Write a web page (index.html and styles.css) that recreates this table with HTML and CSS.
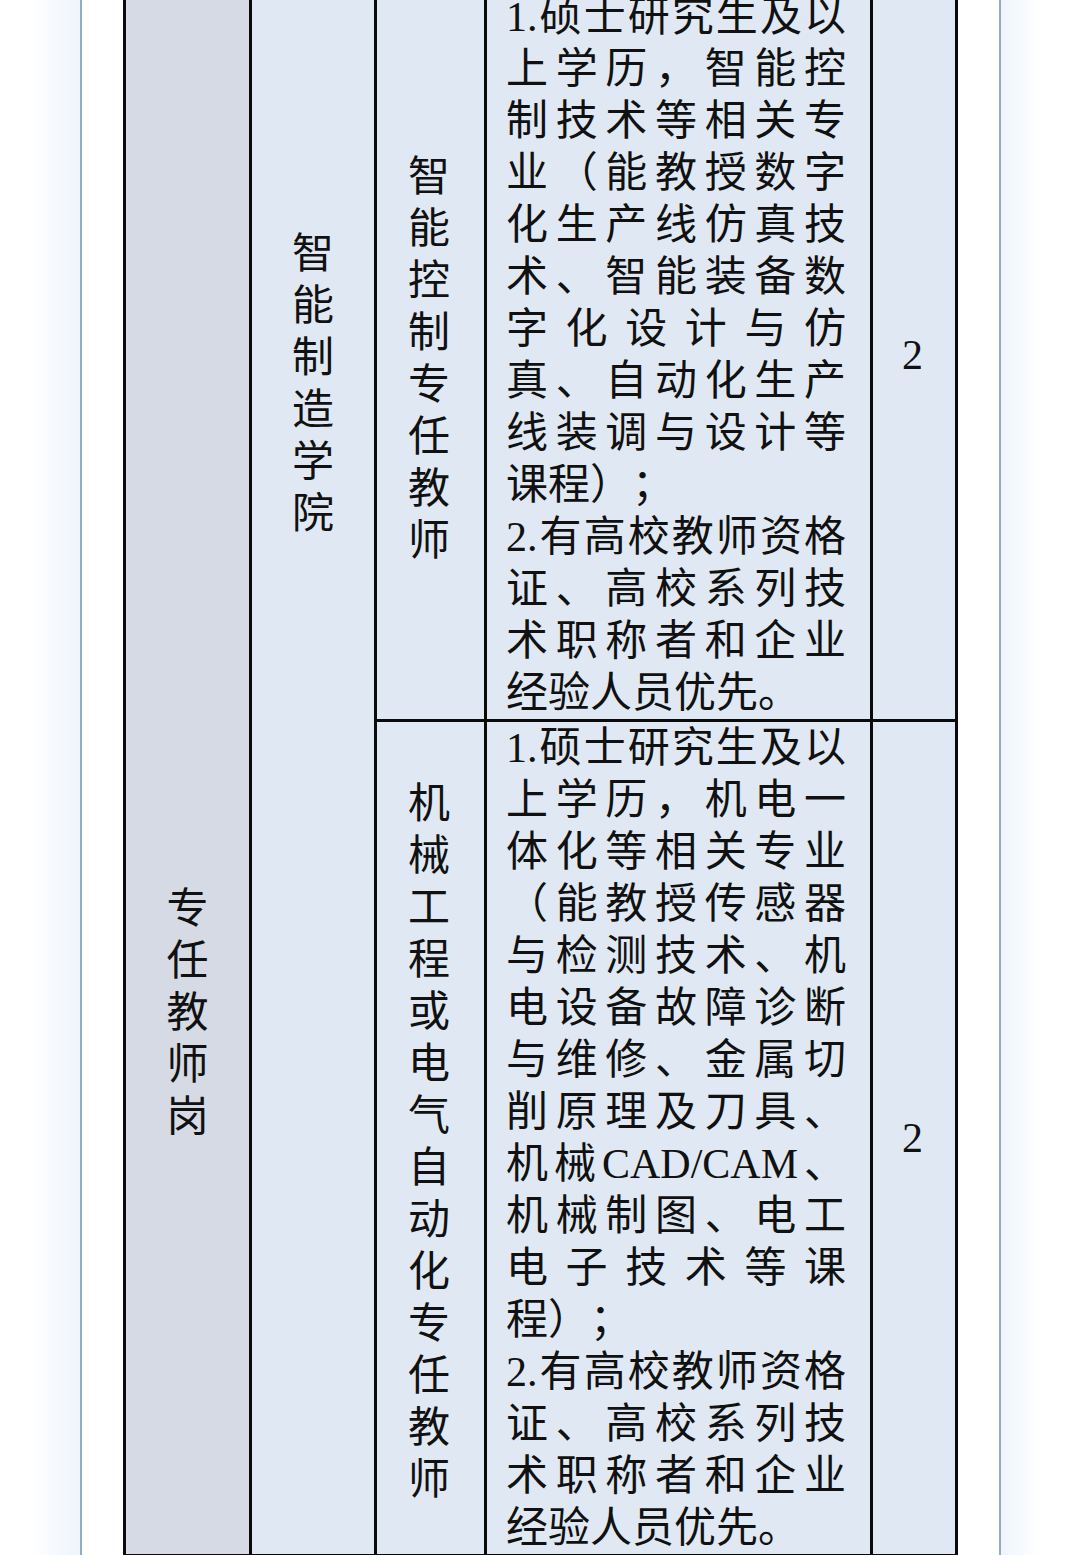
FILE: index.html
```html
<!DOCTYPE html>
<html lang="zh-CN">
<head>
<meta charset="utf-8">
<title>专任教师岗</title>
<link rel="stylesheet" href="styles.css">
</head>
<body>
<div class="frame">
  <div class="table">
    <div class="cell post"><div class="vt">专任教师岗</div></div>
    <div class="cell dept"><div class="vt">智能制造学院</div></div>

    <div class="cell name r1"><div class="vt">智能控制专任教师</div></div>
    <div class="cell req r1">
      <span class="ln">1.硕士研究生及以</span>
      <span class="ln">上学历，智能控</span>
      <span class="ln">制技术等相关专</span>
      <span class="ln">业（能教授数字</span>
      <span class="ln">化生产线仿真技</span>
      <span class="ln">术、智能装备数</span>
      <span class="ln">字化设计与仿</span>
      <span class="ln">真、自动化生产</span>
      <span class="ln">线装调与设计等</span>
      <span class="ln end">课程）；</span>
      <span class="ln">2.有高校教师资格</span>
      <span class="ln">证、高校系列技</span>
      <span class="ln">术职称者和企业</span>
      <span class="ln end">经验人员优先。</span>
    </div>
    <div class="cell num r1">2</div>

    <div class="cell name r2"><div class="vt">机械工程或电气自动化专任教师</div></div>
    <div class="cell req r2">
      <span class="ln">1.硕士研究生及以</span>
      <span class="ln">上学历，机电一</span>
      <span class="ln">体化等相关专业</span>
      <span class="ln">（能教授传感器</span>
      <span class="ln">与检测技术、机</span>
      <span class="ln">电设备故障诊断</span>
      <span class="ln">与维修、金属切</span>
      <span class="ln">削原理及刀具、</span>
      <span class="ln">机械CAD/CAM、</span>
      <span class="ln">机械制图、电工</span>
      <span class="ln">电子技术等课</span>
      <span class="ln end">程）；</span>
      <span class="ln">2.有高校教师资格</span>
      <span class="ln">证、高校系列技</span>
      <span class="ln">术职称者和企业</span>
      <span class="ln end">经验人员优先。</span>
    </div>
    <div class="cell num r2">2</div>
  </div>
</div>
</body>
</html>
```

FILE: styles.css
```css
html, body {
  margin: 0;
  padding: 0;
  height: 1555px;
  overflow: hidden;
}

body {
  background: linear-gradient(to right,
    #ffffff 0px, #ffffff 30px, #eef5fb 80px,
    #eef5fb 1001px, #ffffff 1040px, #ffffff 1080px);
  font-family: "Liberation Serif", "Noto Sans CJK SC", serif;
  color: #111;
  text-spacing-trim: space-all;
}

.frame {
  display: flow-root;
  margin-left: 80px;
  width: 921px;
  height: 1555px;
  background: #ffffff;
  border-left: 2px solid #93acc5;
  border-right: 2px solid #93acc5;
  padding: 0 41px;
  box-sizing: border-box;
}

.table {
  margin-top: -12px;
  display: grid;
  grid-template-columns: 123px 122px 107px 383px 82px;
  grid-template-rows: 728px 832px;
  gap: 3px;
  padding: 3px;
  background: #0a0a0a;
  width: 835px;
  box-sizing: border-box;
}

.cell {
  background: #e0e9f3;
  font-size: 42px;
  line-height: 52px;
}

.post {
  grid-column: 1;
  grid-row: 1 / span 2;
  background: #d6dae5;
  padding-top: 888px;
}

.dept {
  grid-column: 2;
  grid-row: 1 / span 2;
  padding-top: 233px;
}

.r1 { grid-row: 1; }
.r2 { grid-row: 2; }

.name {
  grid-column: 3;
  display: flex;
  align-items: center;
  justify-content: center;
  padding-right: 3px;
}

.vt {
  width: 1em;
  margin: 0 auto;
  text-align: center;
  font-family: "Noto Sans CJK SC", sans-serif;
  line-height: 52px;
}

.name .vt { margin: 0; }

.req {
  grid-column: 4;
  padding: 0 24px 0 19px;
}

.ln {
  display: block;
  height: 52px;
  text-align: justify;
  text-align-last: justify;
  white-space: nowrap;
}

.ln.end {
  text-align-last: left;
}

.num {
  grid-column: 5;
  display: flex;
  align-items: center;
  justify-content: center;
  font-size: 42px;
  padding-right: 3px;
}
```
